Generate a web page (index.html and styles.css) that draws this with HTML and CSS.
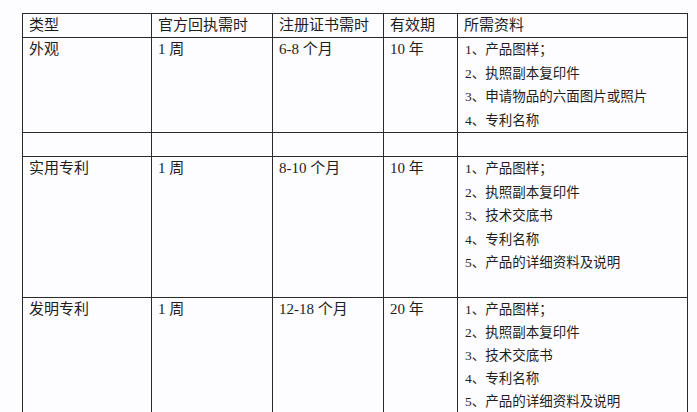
FILE: index.html
```html
<!DOCTYPE html>
<html lang="zh">
<head>
<meta charset="utf-8">
<link rel="stylesheet" href="styles.css">
</head>
<body>
<table class="grid">
  <colgroup>
    <col class="c1"><col class="c2"><col class="c3"><col class="c4"><col class="c5">
  </colgroup>
  <tr class="head">
    <td>类型</td><td>官方回执需时</td><td>注册证书需时</td><td>有效期</td><td>所需资料</td>
  </tr>
  <tr class="r1">
    <td>外观</td><td>1 周</td><td>6-8 个月</td><td>10 年</td>
    <td class="list">1、产品图样；<br>2、执照副本复印件<br>3、申请物品的六面图片或照片<br>4、专利名称</td>
  </tr>
  <tr class="gap">
    <td></td><td></td><td></td><td></td><td></td>
  </tr>
  <tr class="r2">
    <td>实用专利</td><td>1 周</td><td>8-10 个月</td><td>10 年</td>
    <td class="list">1、产品图样；<br>2、执照副本复印件<br>3、技术交底书<br>4、专利名称<br>5、产品的详细资料及说明</td>
  </tr>
  <tr class="r3">
    <td>发明专利</td><td>1 周</td><td>12-18 个月</td><td>20 年</td>
    <td class="list">1、产品图样；<br>2、执照副本复印件<br>3、技术交底书<br>4、专利名称<br>5、产品的详细资料及说明</td>
  </tr>
</table>
</body>
</html>
```

FILE: styles.css
```css
html, body {
  margin: 0;
  padding: 0;
  background: #fdfcfe;
}
body {
  font-family: "Liberation Serif", "Noto Sans CJK SC", serif;
  color: #1e1e1e;
  overflow: hidden;
}
.grid {
  margin: 13px 0 0 22px;
  border-collapse: collapse;
  table-layout: fixed;
  width: 665px;
}
.c1 { width: 129px; }
.c2 { width: 121px; }
.c3 { width: 111px; }
.c4 { width: 74px; }
.c5 { width: 230px; }
.grid td {
  border: 1.5px solid #2a2a2a;
  padding: 0 0 0 6px;
  vertical-align: top;
  font-size: 15px;
  line-height: 23px;
  white-space: nowrap;
  overflow: hidden;
}
.grid td.list {
  font-size: 13.5px;
  line-height: 23.5px;
  padding-left: 7px;
}
.head td { height: 22px; }
.r1 td { height: 94px; }
.gap td { height: 23px; }
.r2 td { height: 140px; }
.r3 td { height: 140px; }
.r3 td.list { line-height: 23px; }
```
